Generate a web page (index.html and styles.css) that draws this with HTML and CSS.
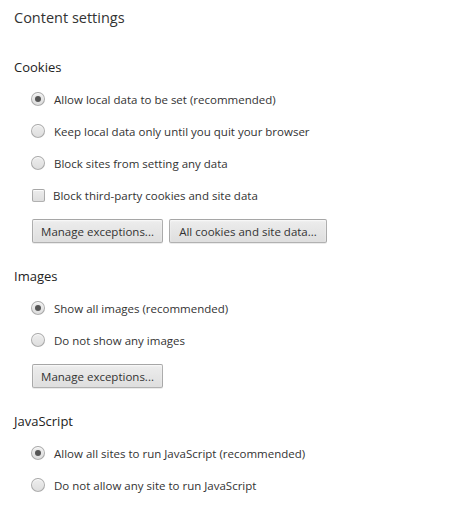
FILE: index.html
```html
<!doctype html>
<html>
<head>
    <meta charset="UTF-8">
    <title>Content settings</title>
    <link rel="stylesheet" href="styles.css">
</head>
<body>
    <div class="page">
        <h1 class="page-title">Content settings</h1>

        <section class="group">
            <h2 class="group-title">Cookies</h2>
            <label class="option"><span class="radio checked"></span>Allow local data to be set (recommended)</label>
            <label class="option"><span class="radio"></span>Keep local data only until you quit your browser</label>
            <label class="option"><span class="radio"></span>Block sites from setting any data</label>
            <label class="option"><span class="checkbox"></span>Block third-party cookies and site data</label>
            <div class="buttons">
                <button class="btn btn-manage">Manage exceptions...</button>
                <button class="btn btn-cookies">All cookies and site data...</button>
            </div>
        </section>

        <section class="group">
            <h2 class="group-title">Images</h2>
            <label class="option"><span class="radio checked"></span>Show all images (recommended)</label>
            <label class="option"><span class="radio"></span>Do not show any images</label>
            <div class="buttons">
                <button class="btn btn-manage">Manage exceptions...</button>
            </div>
        </section>

        <section class="group">
            <h2 class="group-title">JavaScript</h2>
            <label class="option"><span class="radio checked"></span>Allow all sites to run JavaScript (recommended)</label>
            <label class="option"><span class="radio"></span>Do not allow any site to run JavaScript</label>
        </section>
    </div>
</body>
</html>
```

FILE: styles.css
```css
body {
    margin: 0;
    background: #fff;
    font-family: "Open Sans", "Noto Sans", sans-serif;
    color: #333;
}
.page {
    padding: 2px 0 0 14px;
}
.page-title {
    margin: 0;
    height: 32px;
    line-height: 32px;
    font-size: 14.5px;
    font-weight: normal;
    color: #333;
}
.group {
    display: flex;
    flex-direction: column;
    margin-top: 17px;
}
.group-title {
    margin: 0;
    height: 32px;
    line-height: 32px;
    font-size: 13px;
    font-weight: normal;
    color: #222;
}
.option {
    display: flex;
    align-items: center;
    height: 32px;
    padding-left: 17px;
    font-size: 11.5px;
    color: #333;
}
.radio,
.checkbox {
    flex: none;
    width: 12px;
    height: 12px;
    margin-right: 9px;
    border: 1px solid rgba(0, 0, 0, 0.25);
    background: linear-gradient(#ededed, #dedede);
    box-shadow: inset 0 1px 0 rgba(255, 255, 255, 0.8);
    display: flex;
    align-items: center;
    justify-content: center;
}
.radio {
    border-radius: 50%;
}
.checkbox {
    width: 11px;
    height: 11px;
    margin: 0 8px 0 1px;
    border-radius: 2px;
}
.radio.checked::after {
    content: "";
    width: 6px;
    height: 6px;
    border-radius: 50%;
    background: #555;
}
.buttons {
    display: flex;
    gap: 6px;
    padding-left: 18px;
    margin-top: 8px;
}
.btn {
    height: 24px;
    padding: 0;
    white-space: nowrap;
    font-family: inherit;
    font-size: 11.5px;
    color: #333;
    border: 1px solid rgba(0, 0, 0, 0.25);
    border-radius: 2px;
    background: linear-gradient(#ededed, #dedede);
    box-shadow: 0 1px 0 rgba(0, 0, 0, 0.08), inset 0 1px 2px rgba(255, 255, 255, 0.75);
}
.btn-manage {
    width: 131px;
}
.btn-cookies {
    width: 158px;
}
```
